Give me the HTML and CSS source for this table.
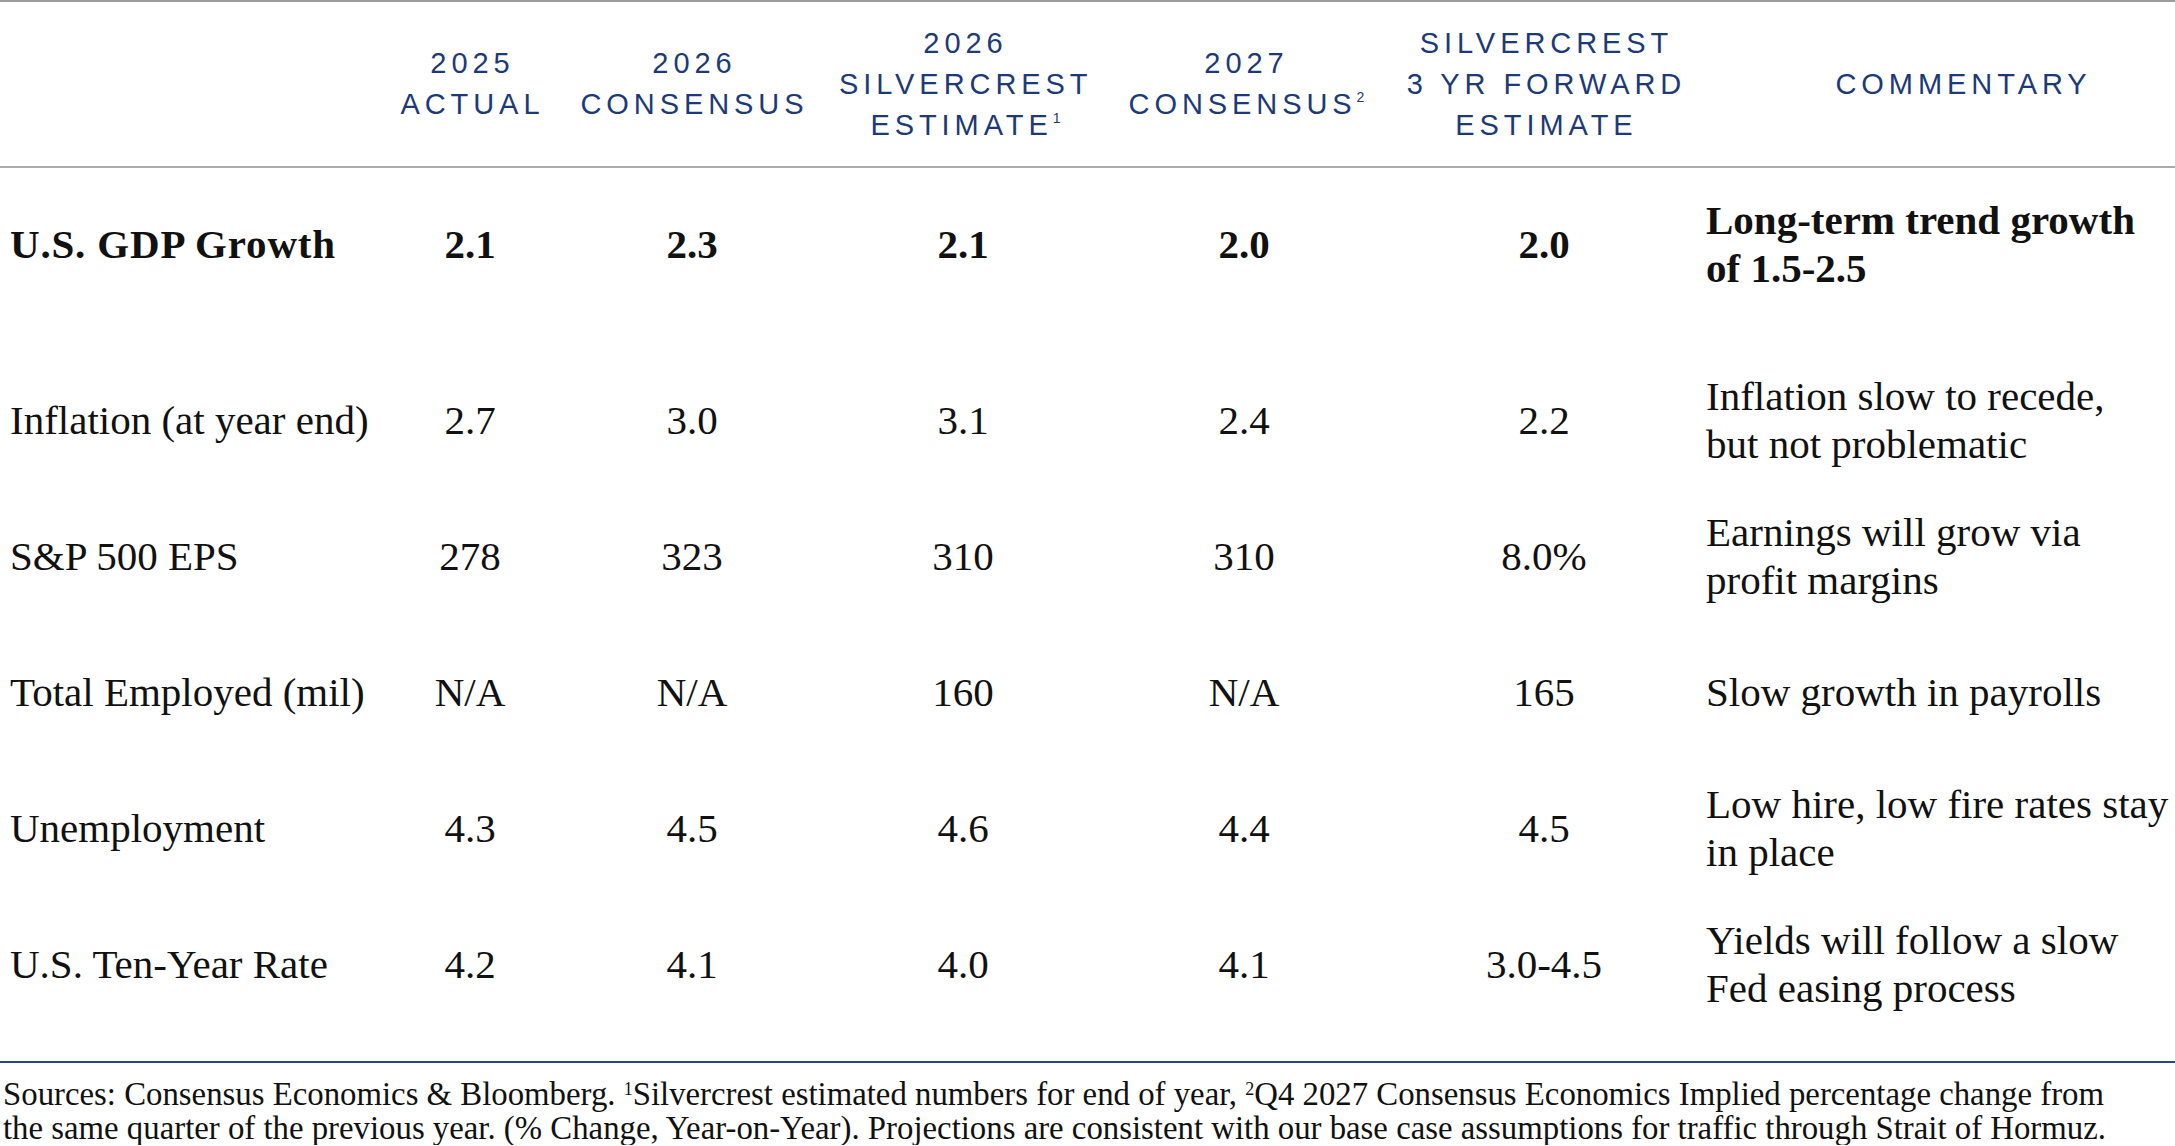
FILE: index.html
```html
<!DOCTYPE html>
<html>
<head>
<meta charset="utf-8">
<link rel="stylesheet" href="styles.css">
</head>
<body>
<div class="page">
  <div class="table">
    <div class="row head">
      <div class="cell"></div>
      <div class="cell hc">2025<br>ACTUAL</div>
      <div class="cell hc">2026<br>CONSENSUS</div>
      <div class="cell hc">2026<br>SILVERCREST<br>ESTIMATE<sup>1</sup></div>
      <div class="cell hc">2027<br>CONSENSUS<sup>2</sup></div>
      <div class="cell hc">SILVERCREST<br>3 YR FORWARD<br>ESTIMATE</div>
      <div class="cell hc comm-h">COMMENTARY</div>
    </div>
    <div class="row first bold">
      <div class="cell label">U.S. GDP Growth</div>
      <div class="cell num">2.1</div>
      <div class="cell num">2.3</div>
      <div class="cell num">2.1</div>
      <div class="cell num">2.0</div>
      <div class="cell num">2.0</div>
      <div class="cell comm">Long-term trend growth<br>of 1.5-2.5</div>
    </div>
    <div class="row">
      <div class="cell label">Inflation (at year end)</div>
      <div class="cell num">2.7</div>
      <div class="cell num">3.0</div>
      <div class="cell num">3.1</div>
      <div class="cell num">2.4</div>
      <div class="cell num">2.2</div>
      <div class="cell comm">Inflation slow to recede,<br>but not problematic</div>
    </div>
    <div class="row">
      <div class="cell label">S&amp;P 500 EPS</div>
      <div class="cell num">278</div>
      <div class="cell num">323</div>
      <div class="cell num">310</div>
      <div class="cell num">310</div>
      <div class="cell num">8.0%</div>
      <div class="cell comm">Earnings will grow via<br>profit margins</div>
    </div>
    <div class="row">
      <div class="cell label">Total Employed (mil)</div>
      <div class="cell num">N/A</div>
      <div class="cell num">N/A</div>
      <div class="cell num">160</div>
      <div class="cell num">N/A</div>
      <div class="cell num">165</div>
      <div class="cell comm">Slow growth in payrolls</div>
    </div>
    <div class="row">
      <div class="cell label">Unemployment</div>
      <div class="cell num">4.3</div>
      <div class="cell num">4.5</div>
      <div class="cell num">4.6</div>
      <div class="cell num">4.4</div>
      <div class="cell num">4.5</div>
      <div class="cell comm">Low hire, low fire rates stay<br>in place</div>
    </div>
    <div class="row">
      <div class="cell label">U.S. Ten-Year Rate</div>
      <div class="cell num">4.2</div>
      <div class="cell num">4.1</div>
      <div class="cell num">4.0</div>
      <div class="cell num">4.1</div>
      <div class="cell num">3.0-4.5</div>
      <div class="cell comm">Yields will follow a slow<br>Fed easing process</div>
    </div>
  </div>
  <p class="footer">Sources: Consensus Economics &amp; Bloomberg. <sup>1</sup>Silvercrest estimated numbers for end of year, <sup>2</sup>Q4 2027 Consensus Economics Implied percentage change from<br>the same quarter of the previous year. (% Change, Year-on-Year). Projections are consistent with our base case assumptions for traffic through Strait of Hormuz.</p>
</div>
</body>
</html>
```
FILE: styles.css
```css
html, body {
  margin: 0;
  padding: 0;
  background: #fff;
}
.page {
  width: 2175px;
  font-family: "Liberation Serif", "Times New Roman", serif;
  color: #111;
}
.table {
  border-top: 2px solid #9c9c9c;
  border-bottom: 2px solid #2c4785;
  padding-bottom: 29px;
}
.row {
  display: grid;
  grid-template-columns: 390px 160px 284px 258px 304px 296px 1fr;
  align-items: center;
  height: 136px;
  font-size: 41px;
  line-height: 48px;
}
.row.head {
  height: 164px;
  border-bottom: 2px solid #ababab;
}
.row.first {
  height: 184px;
  padding-bottom: 32px;
  box-sizing: border-box;
}
.bold {
  font-weight: bold;
}
.bold .label {
  letter-spacing: 0.02em;
}
.cell {
  white-space: nowrap;
}
.hc {
  font-family: "Liberation Sans", Arial, sans-serif;
  font-size: 29px;
  line-height: 41px;
  letter-spacing: 0.17em;
  padding-left: 0.17em;
  color: #1d3a78;
  text-align: center;
}
.hc sup {
  font-size: 14px;
  letter-spacing: 0;
  vertical-align: 12px;
  line-height: 0;
}
.comm-h {
  padding-left: 60px;
}
.label {
  padding-left: 10px;
}
.num {
  text-align: center;
}
.comm {
  padding-left: 14px;
}
.footer {
  margin: 14px 0 0 3px;
  font-size: 32.8px;
  line-height: 34px;
  white-space: nowrap;
  color: #111;
}
.footer sup {
  font-size: 18px;
  line-height: 0;
  vertical-align: 10px;
}
```
